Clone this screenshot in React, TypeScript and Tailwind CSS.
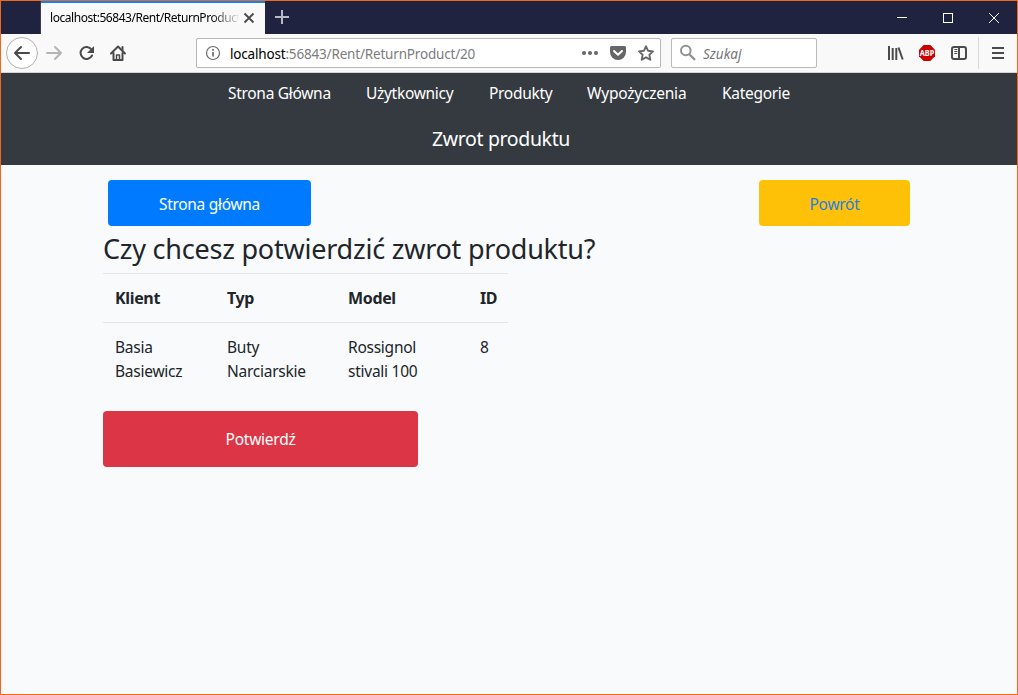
import React from 'react';

const NAV = [
  { label: 'Strona Główna', cls: 'w-[138px]' },
  { label: 'Użytkownicy', cls: 'w-[123px]' },
  { label: 'Produkty', cls: 'w-[98px]' },
  { label: 'Wypożyczenia', cls: 'w-[135px] tracking-[-0.22px]' },
  { label: 'Kategorie', cls: 'w-[68px]' },
];

function TitleBar() {
  return (
    <div className="flex h-[33px] shrink-0 bg-[#202340]">
      <div className="ml-[39px] flex w-[225px] items-center border-l border-[#3a3d58] bg-[#f9f9fa] shadow-[inset_0_2px_0_#0a84ff]">
        <div className="ml-[9px] w-[188px] overflow-hidden whitespace-nowrap text-[12px] leading-[16px] tracking-[-0.45px] text-black [mask-image:linear-gradient(to_right,black_160px,transparent_192px)]">
          localhost:56843/Rent/ReturnProduct/20
        </div>
        <svg className="ml-[5px]" width="12" height="12" viewBox="0 0 12 12" stroke="#4a4a4b" strokeWidth="1.8">
          <path d="M1.5 1.5l9 9M10.5 1.5l-9 9" />
        </svg>
      </div>
      <svg className="ml-[9px] mt-[8px]" width="16" height="16" viewBox="0 0 16 16" stroke="#b9bac6" strokeWidth="2">
        <path d="M8 1v14M1 8h14" />
      </svg>
      <div className="ml-auto flex">
        <svg width="138" height="33" viewBox="879 1 138 33" fill="none" stroke="#fff" shapeRendering="crispEdges">
          <path d="M897 17.5h10" />
          <path d="M943.5 13.5h9v9h-9z" />
          <path d="M989 13l10 10M999 13l-10 10" shapeRendering="auto" />
        </svg>
      </div>
    </div>
  );
}

function LeftIcons() {
  return (
    <svg className="w-[135px] shrink-0" height="38" viewBox="1 34 135 38" fill="none" stroke="#4a4a4b" strokeWidth="2" strokeLinecap="round" strokeLinejoin="round">
      <circle cx="22" cy="53" r="15.5" fill="#fff" stroke="#b1b1b3" strokeWidth="1" />
      <path d="M29 53H15.500M21 47l-6 6 6 6" />
      <path d="M47 53H60.500M55 47l6 6-6 6" stroke="#b4b4b5" />
      <path d="M91.500 49.500a6 6 0 1 0 .5 6" />
      <path d="M94 46v7h-7z" fill="#4a4a4b" stroke="none" />
      <path d="M111 53.500l7-7 7 7M113.500 53v7h9v-7" />
      <path d="M116.500 60v-5h3v5" strokeWidth="1.500" />
      <path d="M122.500 47v3" />
    </svg>
  );
}

function RightIcons() {
  return (
    <svg className="ml-auto w-[137px] shrink-0" height="38" viewBox="880 34 137 38" fill="none" stroke="#4a4a4b" strokeWidth="2">
      <path d="M889 46v14M892.700 48v12M896.300 48v12" />
      <path d="M898.500 47.500l4.200 12" />
      <path d="M923.700 45h6.600l4.700 4.700v6.600l-4.700 4.700h-6.600l-4.700-4.700v-6.600z" fill="#cb0000" stroke="none" />
      <text x="927" y="56" textAnchor="middle" fontSize="8.500" fontWeight="700" fill="#fff" stroke="none" textLength="14.500" lengthAdjust="spacingAndGlyphs">ABP</text>
      <rect x="952" y="47" width="14" height="12" rx="2" />
      <path d="M959 47v12" />
      <path d="M954.300 49.500h3M954.300 51.500h3M954.300 53.500h3" strokeWidth="1" />
      <path d="M978.500 37v32" stroke="#d7d7db" strokeWidth="1" />
      <path d="M992 48h12M992 53h12M992 58h12" />
    </svg>
  );
}

function Toolbar() {
  return (
    <div className="flex h-[39px] shrink-0 border-b border-[#d5d5d6] bg-[#f9f9fa]">
      <LeftIcons />
      <div className="ml-[60px] mt-[4px] flex h-[30px] w-[465px] items-center rounded-[2px] border border-[#b8b8ba] bg-white">
        <svg className="ml-[8px]" width="16" height="16" viewBox="0 0 16 16" fill="none" stroke="#6b6b6c">
          <circle cx="8" cy="8" r="6.500" strokeWidth="1.200" />
          <path d="M8 7v4.500M8 4v1.700" strokeWidth="1.700" />
        </svg>
        <div className="ml-[9px] mt-px whitespace-nowrap text-[13.5px] leading-[20px] tracking-[-0.18px] text-[#7c7c7d]">
          <span className="text-black">localhost</span>:56843/Rent/ReturnProduct/20
        </div>
        <svg className="ml-auto mr-[4px] shrink-0" width="76" height="20" viewBox="580 43 76 20" fill="#666667">
          <circle cx="584" cy="53" r="2" />
          <circle cx="590" cy="53" r="2" />
          <circle cx="596" cy="53" r="2" />
          <path d="M611.500 46h13a1.500 1.500 0 0 1 1.500 1.500V52a8 8 0 0 1-16 0v-4.500a1.500 1.500 0 0 1 1.500-1.500z" />
          <path d="M614 51l4 3.800 4-3.800" fill="none" stroke="#fff" strokeWidth="2" strokeLinecap="round" strokeLinejoin="round" />
          <path d="M646 46.300l2.100 4.500 4.900.6-3.600 3.400.9 4.900-4.300-2.400-4.300 2.400.9-4.900-3.600-3.400 4.900-.6z" fill="none" stroke="#666667" strokeWidth="1.900" strokeLinejoin="round" />
        </svg>
      </div>
      <div className="ml-[10px] mt-[4px] flex h-[30px] w-[146px] items-center rounded-[2px] border border-[#b8b8ba] bg-white">
        <svg className="ml-[7px]" width="18" height="18" viewBox="0 0 18 18" fill="none" stroke="#929293" strokeWidth="2">
          <circle cx="6.800" cy="6.500" r="4.800" />
          <path d="M10.500 10.500l5.500 5.300" strokeWidth="2.400" />
        </svg>
        <span className="ml-[6px] mt-px text-[13.5px] italic leading-[20px] text-[#757576]">Szukaj</span>
      </div>
      <RightIcons />
    </div>
  );
}

function Header() {
  return (
    <header className="h-[92px] shrink-0 bg-[#343a40] text-white">
      <nav className="ml-[227px] flex pt-[8px] text-[15.5px] leading-[24px] tracking-[-0.3px]">
        {NAV.map((n) => (
          <a key={n.label} className={'whitespace-nowrap ' + n.cls}>{n.label}</a>
        ))}
      </nav>
      <div className="ml-[431px] mt-[19px] whitespace-nowrap text-[19.5px] leading-[30px] tracking-[-0.36px]">Zwrot produktu</div>
    </header>
  );
}

function RentTable() {
  return (
    <div className="w-[405px] text-[15.5px] leading-[24px] tracking-[-0.25px]">
      <div className="grid h-[49px] grid-cols-[112px_121px_132px_auto] border-t border-[#e3e6e9] pl-[12px] pt-[12px] text-[16px] font-bold tracking-[-0.35px]">
        <span>Klient</span>
        <span>Typ</span>
        <span>Model</span>
        <span>ID</span>
      </div>
      <div className="grid h-[89px] grid-cols-[112px_121px_132px_auto] border-t border-[#e3e6e9] pl-[12px] pt-[12px]">
        <span>Basia<br />Basiewicz</span>
        <span>Buty<br />Narciarskie</span>
        <span>Rossignol<br />stivali 100</span>
        <span>8</span>
      </div>
    </div>
  );
}

export default function App() {
  return (
    <div className="flex h-[695px] w-[1018px] flex-col overflow-hidden border border-[#f2681b] bg-[#f8f9fa] font-['Noto_Sans','Open_Sans',sans-serif]">
      <TitleBar />
      <Toolbar />
      <Header />
      <main className="flex-1 bg-[#f8fafc] pl-[102px] pt-[15px] text-[#212529]">
        <div className="flex w-[807px] justify-between pl-[5px] text-[15.5px] leading-[24px] tracking-[-0.3px]">
          <button className="h-[46px] w-[203px] rounded-[4px] bg-[#007bff] pt-[2px] text-white">Strona główna</button>
          <button className="h-[46px] w-[151px] rounded-[4px] bg-[#ffc107] pt-[2px] text-[#2280e5]">Powrót</button>
        </div>
        <h2 className="mb-[7px] mt-[5px] whitespace-nowrap text-[27px] leading-[35px] tracking-[-0.23px]">Czy chcesz potwierdzić zwrot produktu?</h2>
        <RentTable />
        <button className="h-[56px] w-[315px] rounded-[4px] bg-[#dc3545] text-[15.5px] leading-[24px] tracking-[-0.25px] text-white">Potwierdź</button>
      </main>
    </div>
  );
}
